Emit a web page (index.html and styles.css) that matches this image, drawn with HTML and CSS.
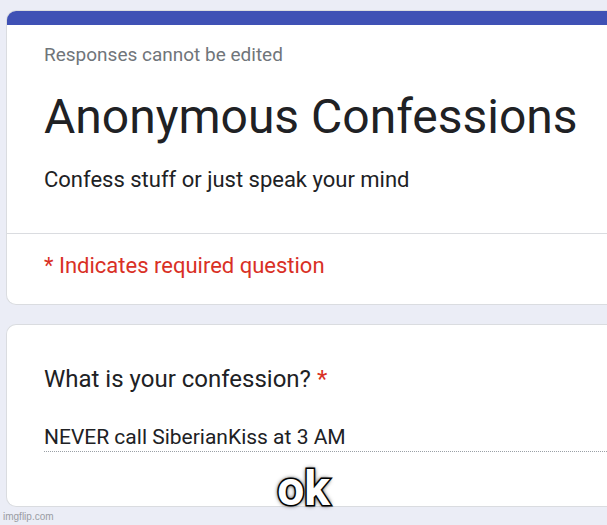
FILE: index.html
```html
<!DOCTYPE html>
<html lang="en">
<head>
    <meta charset="UTF-8">
    <title>Anonymous Confessions</title>
    <link rel="stylesheet" href="styles.css">
</head>
<body>
    <div class="page">
        <div class="form-card header-card">
            <div class="accent-bar"></div>
            <div class="header-body">
                <div class="form-note">Responses cannot be edited</div>
                <h1 class="form-title">Anonymous Confessions</h1>
                <div class="form-desc">Confess stuff or just speak your mind</div>
            </div>
            <div class="required-info">* Indicates required question</div>
        </div>

        <div class="form-card question-card">
            <div class="question-title">What is your confession? <span class="req">*</span></div>
            <div class="answer">NEVER call SiberianKiss at 3 AM</div>
        </div>
    </div>

    <div class="caption">ok</div>
    <div class="watermark">imgflip.com</div>
</body>
</html>
```

FILE: styles.css
```css
:root {
    --accent: #3f51b5;
    --text-color: #202124;
    --muted: #70757a;
    --required: #d93025;
    --bg-color: #ebedf6;
    --card-border: #dadce0;
}

* {
    margin: 0;
    padding: 0;
    box-sizing: border-box;
}

body {
    font-family: Roboto, 'Liberation Sans', sans-serif;
    background-color: var(--bg-color);
    color: var(--text-color);
    width: 607px;
    height: 525px;
    overflow: hidden;
    position: relative;
}

.page {
    padding: 10px 0 0 6px;
    width: 607px;
}

/* cards run off the right edge in the screenshot */
.form-card {
    background-color: #fff;
    border: 1px solid var(--card-border);
    border-right: none;
    border-radius: 10px 0 0 10px;
    overflow: hidden;
}

.accent-bar {
    height: 15px;
    background-color: var(--accent);
    margin: -1px 0 0 -1px;
}

.header-body {
    padding: 18px 0 40px 37px;
    border-bottom: 1px solid var(--card-border);
}

.form-note {
    font-size: 19px;
    color: var(--muted);
    line-height: 24px;
}

.form-title {
    font-size: 48px;
    font-weight: 400;
    line-height: 56px;
    margin-top: 22px;
}

.form-desc {
    font-size: 22px;
    line-height: 26px;
    margin-top: 22px;
}

.required-info {
    color: var(--required);
    font-size: 22px;
    line-height: 26px;
    padding: 19px 0 25px 37px;
}

.question-card {
    margin-top: 19px;
    padding: 40px 0 54px 37px;
}

.question-title {
    font-size: 24px;
    line-height: 28px;
}

.question-title .req {
    color: var(--required);
}

.answer {
    font-size: 21px;
    line-height: 24px;
    margin-top: 32px;
    padding-bottom: 2px;
    border-bottom: 1px dotted #9aa0a6;
}

.caption {
    position: absolute;
    left: 0;
    right: 0;
    top: 465px;
    text-align: center;
    font-size: 48px;
    line-height: 48px;
    font-weight: 700;
    color: #fff;
    -webkit-text-stroke: 3px #000;
    paint-order: stroke fill;
    text-shadow: 0 0 3px #000, 0 0 5px #000;
}

.watermark {
    position: absolute;
    left: 3px;
    bottom: 3px;
    font-family: 'Liberation Sans', sans-serif;
    font-size: 10px;
    color: #9a9ca3;
}
```
